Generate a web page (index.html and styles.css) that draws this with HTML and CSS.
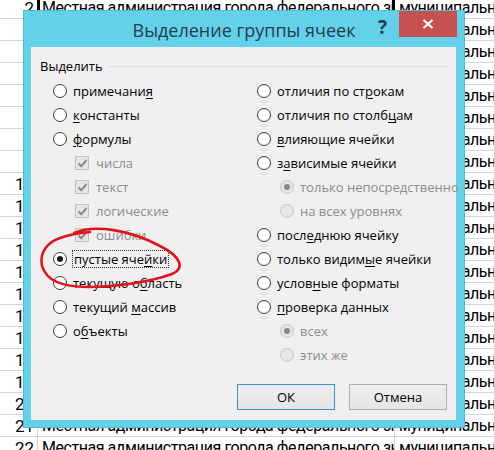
FILE: index.html
```html
<!DOCTYPE html>
<html lang="ru">
<head>
<meta charset="utf-8">
<title>Выделение группы ячеек</title>
<link rel="stylesheet" href="styles.css">
</head>
<body>
<div class="sheet">
  <div class="row"><div class="num">2</div><div class="cell sel">Местная администрация города федерального значения</div><div class="cell">муниципальное образование</div></div>
  <div class="row"><div class="num">3</div><div class="cell">Местная администрация города федерального значения</div><div class="cell">муниципальное образование</div></div>
  <div class="row"><div class="num">4</div><div class="cell">Местная администрация города федерального значения</div><div class="cell">муниципальное образование</div></div>
  <div class="row"><div class="num">5</div><div class="cell">Местная администрация города федерального значения</div><div class="cell">муниципальное образование</div></div>
  <div class="row"><div class="num">6</div><div class="cell">Местная администрация города федерального значения</div><div class="cell">муниципальное образование</div></div>
  <div class="row"><div class="num">7</div><div class="cell">Местная администрация города федерального значения</div><div class="cell">муниципальное образование</div></div>
  <div class="row"><div class="num">8</div><div class="cell">Местная администрация города федерального значения</div><div class="cell">муниципальное образование</div></div>
  <div class="row"><div class="num">9</div><div class="cell">Местная администрация города федерального значения</div><div class="cell">муниципальное образование</div></div>
  <div class="row"><div class="num">10</div><div class="cell">Местная администрация города федерального значения</div><div class="cell">муниципальное образование</div></div>
  <div class="row"><div class="num">11</div><div class="cell">Местная администрация города федерального значения</div><div class="cell">муниципальное образование</div></div>
  <div class="row"><div class="num">12</div><div class="cell">Местная администрация города федерального значения</div><div class="cell">муниципальное образование</div></div>
  <div class="row"><div class="num">13</div><div class="cell">Местная администрация города федерального значения</div><div class="cell">муниципальное образование</div></div>
  <div class="row"><div class="num">14</div><div class="cell">Местная администрация города федерального значения</div><div class="cell">муниципальное образование</div></div>
  <div class="row"><div class="num">15</div><div class="cell">Местная администрация города федерального значения</div><div class="cell">муниципальное образование</div></div>
  <div class="row"><div class="num">16</div><div class="cell">Местная администрация города федерального значения</div><div class="cell">муниципальное образование</div></div>
  <div class="row"><div class="num">17</div><div class="cell">Местная администрация города федерального значения</div><div class="cell">муниципальное образование</div></div>
  <div class="row"><div class="num">18</div><div class="cell">Местная администрация города федерального значения</div><div class="cell">муниципальное образование</div></div>
  <div class="row"><div class="num">19</div><div class="cell">Местная администрация города федерального значения</div><div class="cell">муниципальное образование</div></div>
  <div class="row"><div class="num">20</div><div class="cell">Местная администрация города федерального значения</div><div class="cell">муниципальное образование</div></div>
  <div class="row"><div class="num">21</div><div class="cell">Местная администрация города федерального значения</div><div class="cell">муниципальное образование</div></div>
  <div class="row"><div class="num">22</div><div class="cell">Местная администрация города федерального значения</div><div class="cell">муниципальное образование</div></div>
</div>

<div class="dialog">
  <div class="titlebar">
    <div></div>
    <div class="title">Выделение группы ячеек</div>
    <div class="tb-buttons">
      <span class="help">?</span>
      <span class="close"><svg width="12" height="10" viewBox="0 0 12 10"><path d="M1.5 1 L10.5 9 M10.5 1 L1.5 9" stroke="#fff" stroke-width="2.2" fill="none"/></svg></span>
    </div>
  </div>
  <div class="client">
    <div class="group-head"><span class="group-label">Выделить</span><span class="group-line"></span></div>
    <div class="options">
      <div class="col">
        <div class="opt"><span class="radio"></span><span>примечани<u>я</u></span></div>
        <div class="opt"><span class="radio"></span><span><u>к</u>онстанты</span></div>
        <div class="opt"><span class="radio"></span><span><u>ф</u>ормулы</span></div>
        <div class="opt sub dis"><span class="check"><svg width="11" height="11" viewBox="0 0 11 11"><path d="M1.5 5.5 L4.3 8.3 L9.5 2" stroke="#8a8a8a" stroke-width="2" fill="none"/></svg></span><span>числа</span></div>
        <div class="opt sub dis"><span class="check"><svg width="11" height="11" viewBox="0 0 11 11"><path d="M1.5 5.5 L4.3 8.3 L9.5 2" stroke="#8a8a8a" stroke-width="2" fill="none"/></svg></span><span>текст</span></div>
        <div class="opt sub dis"><span class="check"><svg width="11" height="11" viewBox="0 0 11 11"><path d="M1.5 5.5 L4.3 8.3 L9.5 2" stroke="#8a8a8a" stroke-width="2" fill="none"/></svg></span><span>логические</span></div>
        <div class="opt sub dis"><span class="check"><svg width="11" height="11" viewBox="0 0 11 11"><path d="M1.5 5.5 L4.3 8.3 L9.5 2" stroke="#8a8a8a" stroke-width="2" fill="none"/></svg></span><span>ошибки</span></div>
        <div class="opt"><span class="radio on"></span><span class="focus">пустые яче<u>й</u>ки</span></div>
        <div class="opt"><span class="radio"></span><span>текущую о<u>б</u>ласть</span></div>
        <div class="opt"><span class="radio"></span><span>текущий <u>м</u>ассив</span></div>
        <div class="opt"><span class="radio"></span><span>о<u>б</u>ъекты</span></div>
      </div>
      <div class="col">
        <div class="opt"><span class="radio"></span><span>отличия по ст<u>р</u>окам</span></div>
        <div class="opt"><span class="radio"></span><span>отличия по столб<u>ц</u>ам</span></div>
        <div class="opt"><span class="radio"></span><span><u>в</u>лияющие ячейки</span></div>
        <div class="opt"><span class="radio"></span><span>з<u>а</u>висимые ячейки</span></div>
        <div class="opt sub dis"><span class="radio on"></span><span>только непосредственно</span></div>
        <div class="opt sub dis"><span class="radio"></span><span>на всех уровнях</span></div>
        <div class="opt"><span class="radio"></span><span>посл<u>е</u>днюю ячейку</span></div>
        <div class="opt"><span class="radio"></span><span>только видим<u>ы</u>е ячейки</span></div>
        <div class="opt"><span class="radio"></span><span>услов<u>н</u>ые форматы</span></div>
        <div class="opt"><span class="radio"></span><span><u>п</u>роверка данных</span></div>
        <div class="opt sub dis"><span class="radio on"></span><span>всех</span></div>
        <div class="opt sub dis"><span class="radio"></span><span>этих же</span></div>
      </div>
    </div>
    <div class="buttons">
      <button class="btn default">ОК</button>
      <button class="btn">Отмена</button>
    </div>
  </div>
</div>

<svg class="circle-mark" width="495" height="450" viewBox="0 0 495 450">
  <path d="M74 233 C95 224 130 230 160 246 C180 256 186 268 172 274 C150 282 115 287 88 287 C62 287 46 280 42 266 C39 252 48 242 60 238 C68 235 78 233 90 232" fill="none" stroke="#e3131b" stroke-width="2.6" stroke-linecap="round"/>
</svg>
</body>
</html>
```

FILE: styles.css
```css
html, body {
  margin: 0;
  padding: 0;
}
body {
  width: 495px;
  height: 450px;
  overflow: hidden;
  position: relative;
  background: #fff;
  font-family: "Open Sans", "Noto Sans", sans-serif;
}

/* spreadsheet background */
.sheet {
  margin-top: -3px;
  display: flex;
  flex-direction: column;
  font-family: Roboto, "Noto Sans", sans-serif;
  font-size: 16px;
  color: #000;
}
.row {
  display: grid;
  grid-template-columns: 38px 357px 1fr;
  height: 22px;
  box-sizing: border-box;
  border-bottom: 1px solid #d6d6d6;
  line-height: 22px;
}
.num {
  text-align: right;
  padding-right: 3px;
  border-right: 1px solid #d6d6d6;
  white-space: nowrap;
  overflow: hidden;
  font-size: 17px;
}
.cell {
  white-space: nowrap;
  overflow: hidden;
  padding-left: 4px;
  border-right: 1px solid #d6d6d6;
  letter-spacing: -0.45px;
}
.cell.sel {
  border-left: 3px solid #000;
  border-right: 3px solid #000;
  padding-left: 2px;
  margin-left: -1px;
}

/* dialog window */
.dialog {
  position: absolute;
  left: 23px;
  top: 10px;
  width: 442px;
  height: 418px;
  box-sizing: border-box;
  background: #62d1e9;
  border: 1px solid #4fbdd6;
  padding: 0 8px 7px 7px;
  display: flex;
  flex-direction: column;
}
.titlebar {
  height: 36px;
  display: grid;
  grid-template-columns: 1fr auto 1fr;
  align-items: start;
  margin: 0 -8px 0 -7px;
}
.title {
  font-size: 18px;
  color: #22404c;
  line-height: 24px;
  padding-top: 7px;
  white-space: nowrap;
}
.tb-buttons {
  display: flex;
  justify-content: flex-end;
  align-items: flex-start;
  padding-right: 7px;
}
.help {
  font-family: "Open Sans", sans-serif;
  font-weight: 700;
  font-size: 19px;
  color: #22404c;
  line-height: 20px;
  margin-top: 6px;
  margin-right: 12px;
}
.close {
  width: 58px;
  height: 26px;
  background: #c75050;
  display: flex;
  align-items: center;
  justify-content: center;
}

.client {
  flex: 1;
  background: #f0f0f0;
  padding: 11px 9px 0 9px;
  display: flex;
  flex-direction: column;
  font-size: 13px;
  color: #000;
}
.group-head {
  display: flex;
  align-items: center;
  gap: 6px;
  height: 16px;
  line-height: 16px;
}
.group-line {
  flex: 1;
  height: 1px;
  background: #dcdcdc;
}
.options {
  display: grid;
  grid-template-columns: 204px 1fr;
  padding-left: 13px;
  margin-top: 5px;
}
.opt {
  height: 24px;
  display: flex;
  align-items: center;
  gap: 6px;
  white-space: nowrap;
}
.opt.sub {
  padding-left: 22px;
}
.col .opt.sub .radio {
  margin-left: 1px;
}
.opt.dis {
  color: #8d8d8d;
}
.radio {
  width: 14px;
  height: 14px;
  box-sizing: border-box;
  border-radius: 50%;
  border: 1px solid #3c3c3c;
  background: #fff;
  display: flex;
  align-items: center;
  justify-content: center;
  flex: none;
}
.radio.on::after {
  content: "";
  width: 6px;
  height: 6px;
  border-radius: 50%;
  background: #1a1a1a;
}
.dis .radio {
  border-color: #c6c6c6;
  background: #e6e6e6;
}
.dis .radio.on::after {
  background: #8a8a8a;
}
.check {
  width: 14px;
  height: 14px;
  box-sizing: border-box;
  border: 1px solid #c2c2c2;
  background: #e6e6e6;
  display: flex;
  align-items: center;
  justify-content: center;
  flex: none;
  margin-right: 1px;
}
.focus {
  outline: 1px dotted #333;
  outline-offset: 0;
  padding: 0 1px;
  line-height: 16px;
}
u {
  text-decoration-thickness: 1px;
  text-underline-offset: 2px;
}

.buttons {
  display: flex;
  justify-content: flex-end;
  gap: 14px;
  margin-top: 17px;
}
.btn {
  width: 98px;
  height: 26px;
  font-family: "Open Sans", "Noto Sans", sans-serif;
  font-size: 13px;
  color: #000;
  background: linear-gradient(#efefef, #e5e5e5);
  border: 1px solid #adadad;
  padding: 0;
}
.btn.default {
  border-color: #3c8ed8;
}

.circle-mark {
  position: absolute;
  left: 0;
  top: 0;
  pointer-events: none;
}
```
